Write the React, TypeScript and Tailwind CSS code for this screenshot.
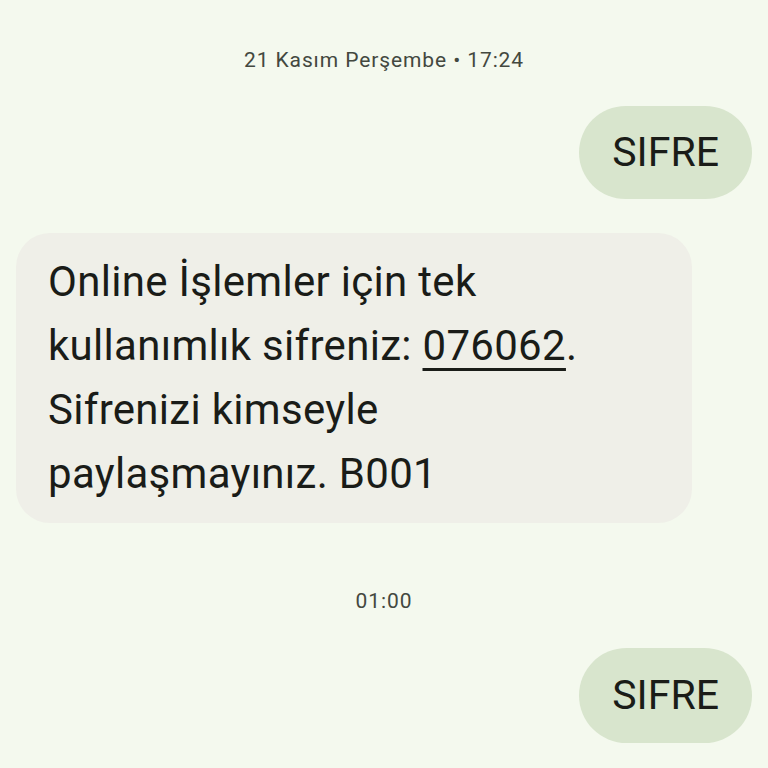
export default function App() {
  return (
    <div
      className="w-[768px] h-[768px] overflow-hidden bg-[#f4f9ee] flex flex-col px-4 text-[#1a1c18]"
      style={{ fontFamily: 'Roboto, "Noto Sans", sans-serif' }}
    >
      <div className="pt-[46px] text-center text-[21px] leading-[28px] tracking-[0.9px] text-[#43483f]">
        21 Kasım Perşembe • 17:24
      </div>
      <div className="mt-[32px] self-end h-[93px] px-[33px] rounded-full bg-[#d8e5cd] flex items-center text-[41px]">
        SIFRE
      </div>
      <div className="mt-[34px] w-[676px] rounded-[34px] bg-[#efefe8] pl-8 pr-6 py-[17px] text-[42px] leading-[64px] tracking-[0.3px]">
        Online İşlemler için tek
        <br />
        kullanımlık sifreniz:{' '}
        <span className="underline decoration-[3px] underline-offset-[8px]">076062</span>.
        <br />
        Sifrenizi kimseyle
        <br />
        paylaşmayınız. B001
      </div>
      <div className="mt-[64px] text-center text-[21px] leading-[28px] tracking-[0.9px] text-[#43483f]">01:00</div>
      <div className="mt-[33px] self-end h-[95px] px-[33px] rounded-full bg-[#d8e5cd] flex items-center text-[41px]">
        SIFRE
      </div>
    </div>
  );
}
